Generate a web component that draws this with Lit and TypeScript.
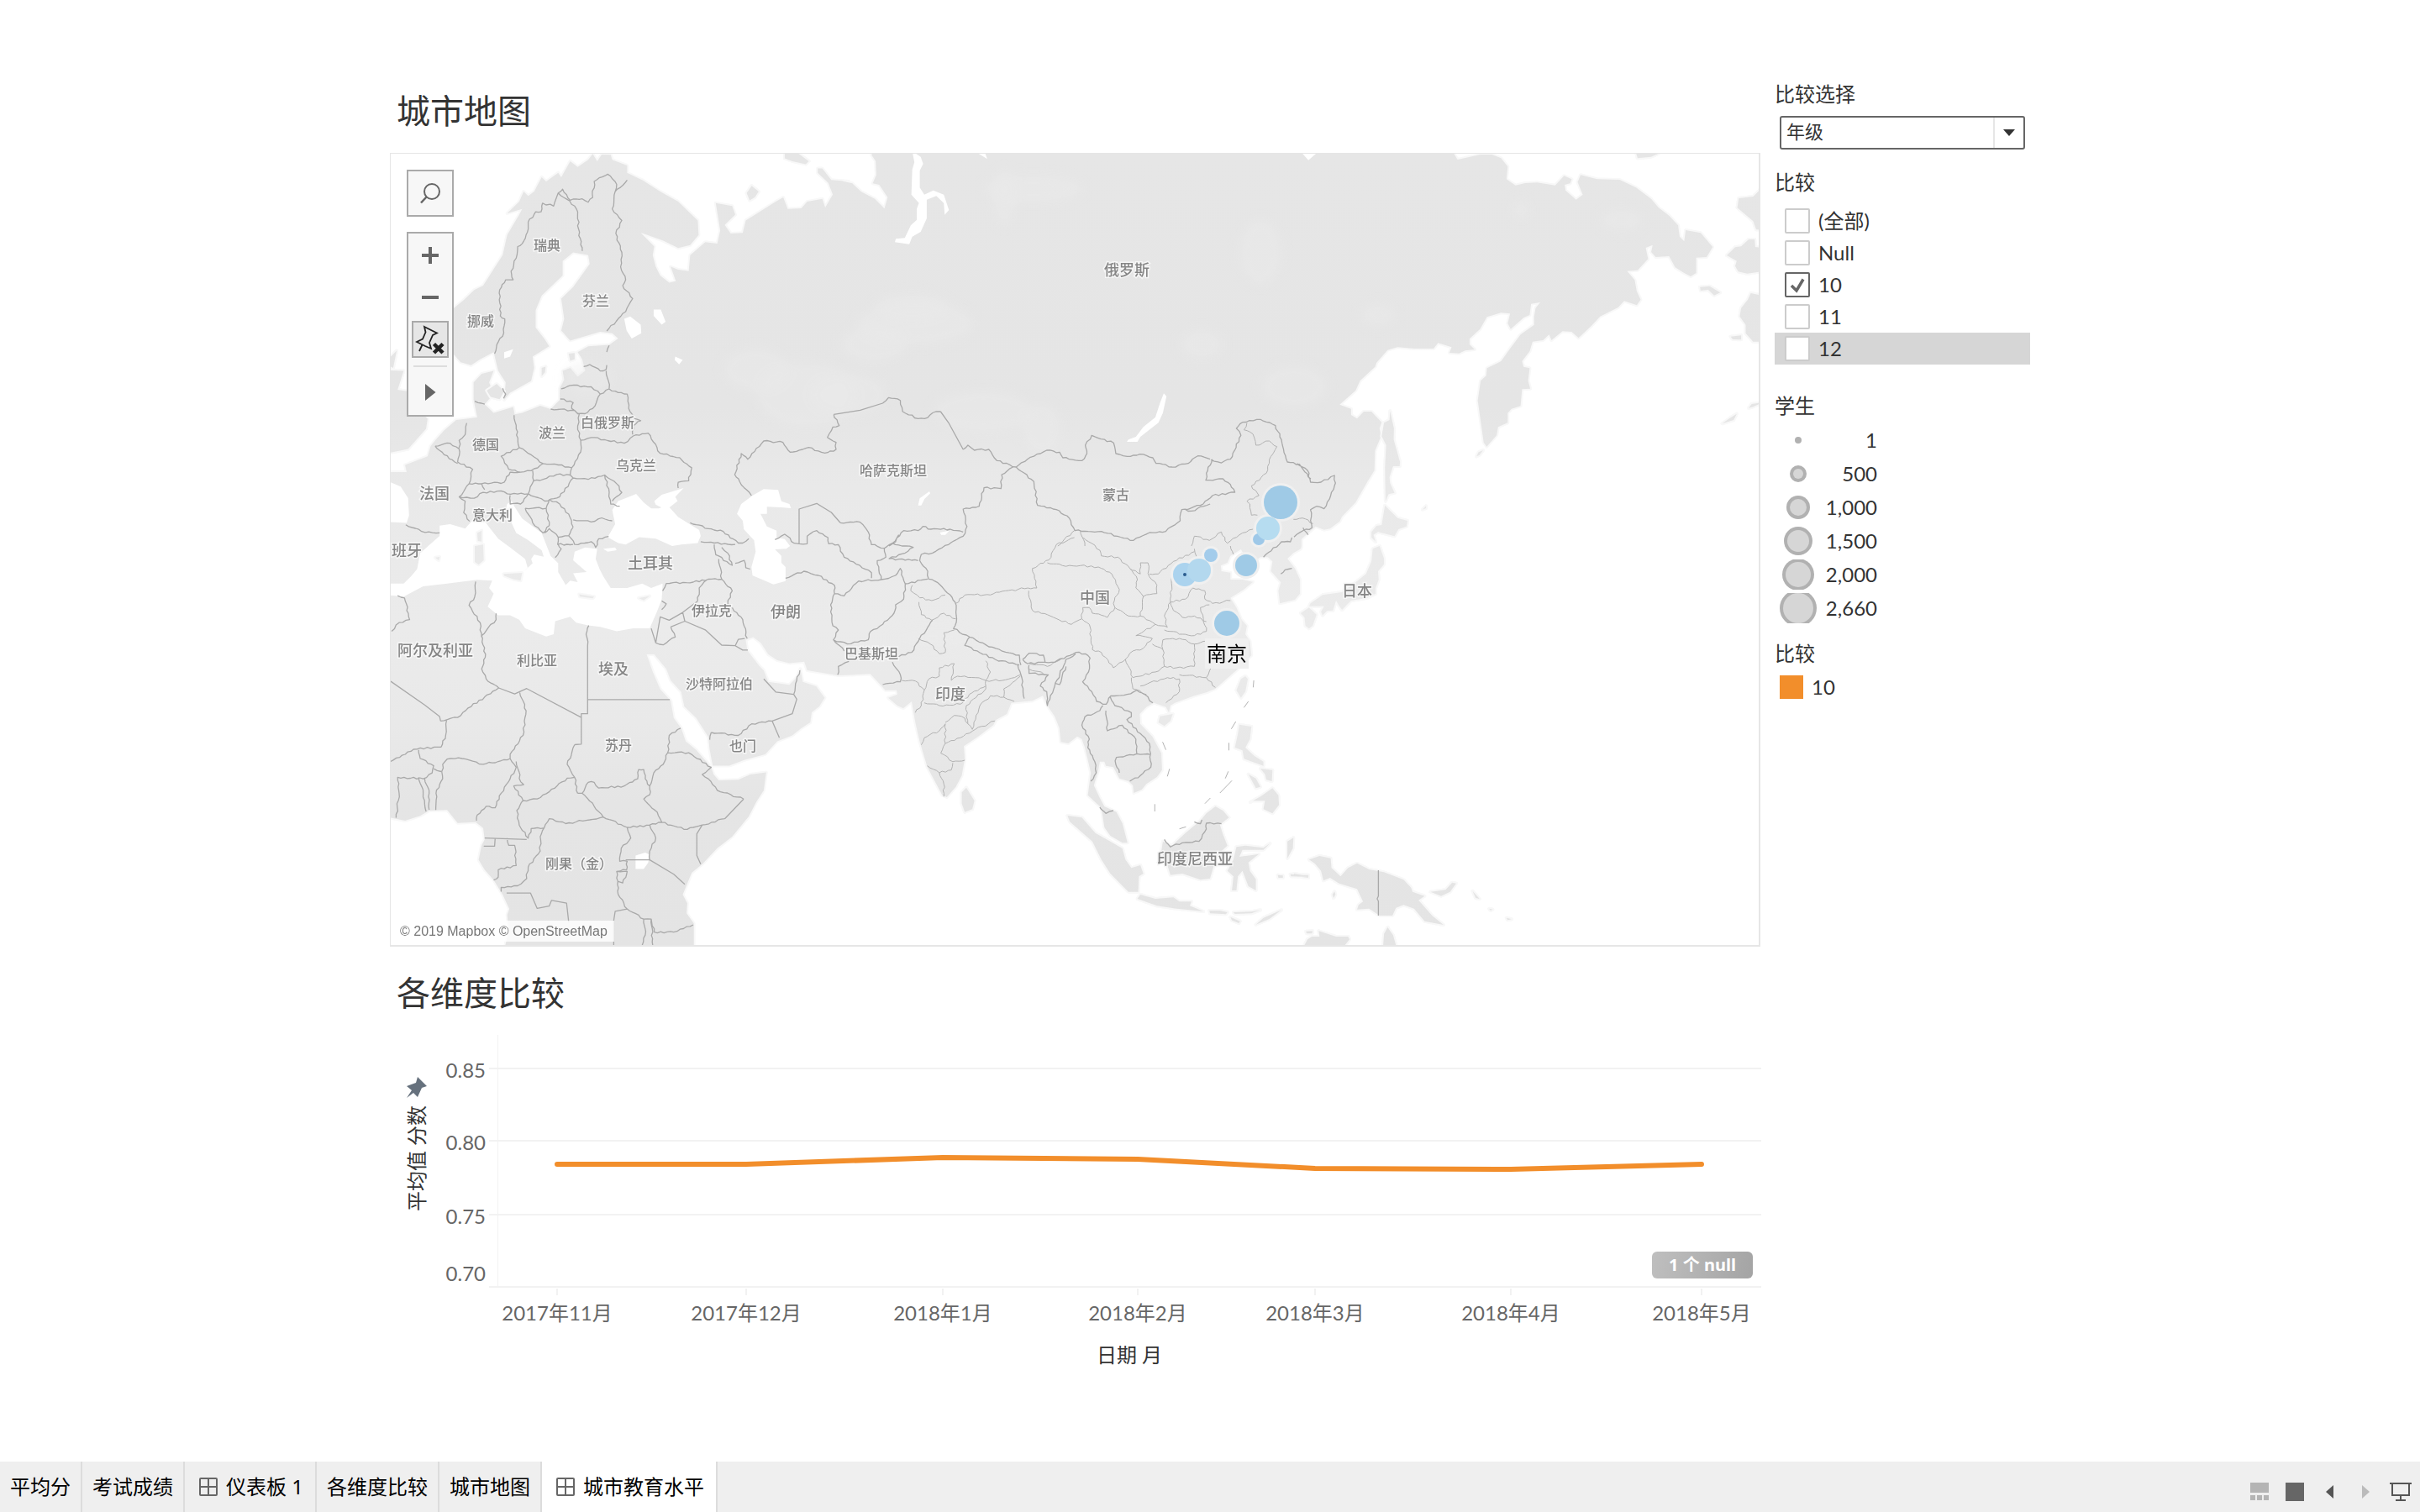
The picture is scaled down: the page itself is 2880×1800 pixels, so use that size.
import { LitElement, html, svg, css } from "lit";
import { customElement, state } from "lit/decorators.js";

type Pt = [number, number];

/* Each survey sheet has its own origin and scale; points are projected to map units. */
const sheet = (ox: number, oy: number, sx: number, sy: number) => (s: string): Pt[] =>
  s.trim().split(/\s+/).map((p) => {
    const [x, y] = p.split(",").map(Number);
    return [ox + x / sx, oy + y / sy] as Pt;
  });

const A = sheet(450, 80, 2.8, 2.904);
const B = sheet(450, 600, 2.8, 2.904);
const C = sheet(1000, 170, 2.8, 3);
const D = sheet(1540, 170, 2.8, 3);
const E = sheet(1000, 640, 2.8, 3);
const F = sheet(1540, 640, 2.8, 3);
const G = sheet(840, 430, 2.613, 3);

const line = (p: Pt[]) => "M" + p.map(([x, y]) => x.toFixed(1) + "," + y.toFixed(1)).join("L");
const ring = (...parts: Pt[][]) => line(parts.flat()) + "Z";

/* Natural frontiers wander: split each leg and push the joints sideways. */
const wander = (p: Pt[], amp: number): string => {
  let seed = 17;
  const rnd = () => {
    seed = (seed * 1103515245 + 12345) % 2147483648;
    return seed / 2147483648 - 0.5;
  };
  const out: Pt[] = [p[0]];
  for (let i = 1; i < p.length; i++) {
    const [x0, y0] = p[i - 1];
    const [x1, y1] = p[i];
    const len = Math.hypot(x1 - x0, y1 - y0) || 1;
    const n = Math.max(1, Math.round(len / 4));
    for (let k = 1; k < n; k++) {
      const d = rnd() * amp * 2;
      out.push([x0 + ((x1 - x0) * k) / n - ((y1 - y0) / len) * d, y0 + ((y1 - y0) * k) / n + ((x1 - x0) / len) * d]);
    }
    out.push([x1, y1]);
  }
  return line(out);
};

const lines = (t: (s: string) => Pt[], s: string) => s.trim().split("|").map((l) => t(l));

const mainland = ring(
  A(`250,835 285,805 320,770 350,755 390,690 415,650 430,580 470,510 480,490 430,505 470,465 485,430 500,445 520,430 545,380 560,395 600,365 610,380 640,325 665,345 700,320 715,300 730,325 745,302 775,303 780,320 830,340 830,365 880,390 940,430 1000,465 1065,530 1068,580 1040,615 1000,625 950,600 875,572 920,620 915,650 925,690 940,720 970,745 992,740 975,690 1000,700 1035,705 1040,650 1090,605 1130,610 1140,565 1125,470 1180,480 1190,510 1155,545 1175,575 1215,573 1225,530 1325,465 1350,450 1365,490 1410,488 1430,465 1480,455 1490,485 1515,440 1500,400 1465,365 1465,350 1480,350 1510,390 1568,395`),
  C(`0,135 40,145 70,175 115,200 147,235 158,195 130,150 108,145 120,115 118,65 105,45 105,30 1540,30`),
  D(`30,30 528,30 545,60 580,52 620,42 660,42 690,55 712,85 708,130 738,152 770,144 810,142 870,152 900,118 925,130 920,145 902,150 905,170 940,203 962,185 945,140 955,115 1010,130 1085,132 1140,160 1190,200 1215,232 1250,260 1280,295 1285,335 1300,352 1305,312 1355,322 1395,372 1375,408 1340,410 1340,465 1322,477 1300,465 1270,445 1250,405 1205,408 1190,390 1195,365 1172,375 1180,415 1145,455 1110,458 1135,490 1142,530 1155,560 1142,580 1100,565 1080,588 1020,620 990,655 948,697 925,675 895,673 858,705 850,685 830,705 795,710 785,745 760,780 765,800 785,805 780,850 787,878 760,880 755,940 725,950 712,965 712,1000 680,1015 675,1045 642,1085 632,1070 612,920 622,850 640,832 643,805 690,780 720,735 755,685 800,650 800,620 805,590 820,570 790,575 785,615 765,625 722,665 712,645 720,610 690,607 643,622 620,665 585,700 585,720 602,738 570,742 550,752 518,750 525,730 480,715 465,735 400,735 345,730 312,740 275,785 270,800 220,850 205,885 152,935 190,950 190,972 210,985 232,960 258,960 292,998 285,1020 290,1048 270,1100 268,1170 245,1210 205,1285 160,1335 152,1352 120,1378 100,1382 72,1370 25,1415 25,1440`),
  E(`1535,40 1510,55 1490,75 1515,110 1532,150 1532,200 1515,222 1465,235 1460,190 1468,160 1435,120 1440,85 1425,70 1400,70 1370,95 1330,125 1345,60 1335,42 1300,65 1290,90 1268,100 1270,120 1300,125 1300,150 1340,150 1375,158 1345,185 1300,215 1320,250 1335,290 1355,315 1350,345 1365,370 1370,420 1345,450 1308,485 1250,540 1220,553 1180,565 1115,590 1100,600 1095,625 1085,605 1045,590 1020,605 998,630 1000,665 1040,710 1070,770 1072,830 1055,855 1020,880 1005,900 978,912 975,885 960,870 930,860 910,820 885,815 880,800 865,800 860,830 845,885 865,930 880,960 920,980 940,1020 957,1090 940,1090 900,1065 880,1035 870,965 825,920 830,880 835,840 815,750 805,720 790,710 760,735 735,730 730,680 715,640 690,600 675,565 640,583 570,590 555,630 520,650 510,670 460,710 412,745 415,790 405,850 385,890 355,927 340,920 325,890 290,820 265,730 250,660 245,630 238,585 210,610 190,600 160,572 190,560 188,545 150,545 120,510 100,487 0,492`),
  B(`1530,592 1430,575 1420,545 1370,550 1330,540 1300,520 1275,480 1250,460 1225,470 1230,505 1270,560 1285,575 1300,615 1370,625 1395,600 1407,570 1415,615 1460,630 1488,670 1470,700 1445,720 1440,755 1410,775 1380,800 1330,820 1290,865 1220,885 1170,905 1115,905 1105,850 1100,805 1060,740 1020,700 1010,650 975,610 960,570 920,520 895,520 915,580 940,640 975,680 985,740 1010,775 1025,820 1060,850 1110,910 1118,935 1135,955 1200,953 1240,935 1293,928 1285,990 1260,1030 1235,1080 1180,1150 1130,1190 1080,1245 1045,1275 1015,1350 1030,1380 1028,1415 1052,1450 1052,1540 420,1540 435,1480 430,1420 437,1400 415,1350 385,1300 355,1265 335,1230 345,1180 355,1160 350,1120 325,1100 265,1103 230,1058 170,1060 140,1078 90,1095 42,1085 30,1085 30,-110`),
  A(`42,1400 95,1400 90,1375 165,1345 175,1310 190,1290 220,1255 260,1220 295,1215 330,1210 318,1150 318,1090 345,1060 385,1050 370,1090 385,1130 355,1165 385,1195 450,1175 455,1200 480,1195 540,1170 575,1182 605,1150 605,1110 620,1080 615,1050 640,1040 665,1070 690,1050 680,1010 665,985 700,965 770,960 800,938 780,920 740,915 640,945 610,910 620,870 610,800 650,760 705,680 700,650 650,640 615,670 615,720 580,755 545,790 525,840 525,900 555,940 570,965 515,1000 520,1040 510,1085 440,1125 420,1150 425,1090 400,1050 385,985 340,1010 310,1030 275,1020 250,990`),
);

const islands = [
  [A, "42,1048 85,1050 65,1115 97,1120 130,1180 165,1215 160,1250 100,1320 42,1332"],
  [A, "42,1000 62,980 50,1040 42,1035"],
  [A, "362,1118 395,1095 420,1120 405,1148 375,1140"],
  [A, "545,1040 558,1035 556,1055 545,1068"],
  [A, "635,990 655,988 655,1010 640,1015"],
  [A, "1355,298 1400,298 1435,325 1425,335 1380,325 1355,315"],
  [A, "1228,435 1245,410 1268,430 1255,450 1238,460"],
  [B, "418,242 480,238 475,265 450,260 420,248"],
  [B, "322,145 350,140 352,195 335,210 322,200"],
  [B, "330,100 345,92 345,130 332,128"],
  [B, "670,312 720,320 715,326 672,320"],
  [B, "868,325 905,318 885,333"],
  [B, "190,185 205,183 202,195"],
  [D, "303,1295 345,1340 378,1350 375,1370 348,1380 335,1405 280,1390 265,1400 272,1425 258,1410 258,1390 275,1368 292,1365"],
  [D, "320,958 333,1020 332,1060 353,1140 352,1155 330,1155 318,1195 320,1215 335,1250 315,1255 305,1280 303,1160 307,1080 292,1048 300,1000 318,990"],
  [F, "262,40 285,30 300,75 300,95 280,120 282,150 272,180 272,200 245,215 190,225 160,258 148,240 140,225 130,260 110,262 95,278 90,265 100,245 50,245 55,235 95,205 160,195 205,160 240,130 258,85"],
  [F, "22,270 50,250 75,275 62,315 50,325 38,315 35,285"],
  [E, "1350,495 1358,505 1350,550 1335,572 1320,545 1335,505"],
  [E, "1065,638 1108,630 1100,655 1080,673 1060,660"],
  [E, "420,893 447,940 440,970 415,980 405,950 405,910"],
  [E, "757,993 805,1000 850,1055 900,1085 940,1110 950,1150 970,1180 1000,1170 1010,1200 995,1210 993,1265 960,1265 900,1200 870,1150 840,1085 765,1015"],
  [E, "1000,1275 1050,1290 1110,1285 1130,1300 1170,1300 1165,1315 1210,1335 1120,1325 1055,1315 990,1290"],
  [E, "1230,1332 1265,1332 1290,1338 1285,1345 1232,1342"],
  [E, "1310,1338 1370,1336 1400,1330 1370,1342 1315,1344"],
  [E, "1385,1382 1410,1358 1470,1330 1430,1362"],
  [E, "1300,1355 1332,1370 1328,1377 1305,1367"],
  [E, "1075,1085 1105,1100 1150,1055 1200,1010 1220,985 1250,960 1275,975 1295,1000 1265,1025 1275,1060 1290,1100 1255,1135 1232,1218 1200,1222 1140,1200 1100,1205 1090,1170 1070,1120"],
  [E, "1320,1105 1350,1100 1410,1108 1432,1092 1410,1115 1340,1115 1330,1140 1395,1130 1360,1160 1365,1190 1385,1220 1385,1260 1360,1245 1340,1190 1325,1210 1320,1260 1305,1260 1310,1210 1290,1190 1310,1150"],
  [E, "1330,668 1370,675 1365,720 1350,750 1380,780 1410,800 1410,815 1345,790 1340,760 1315,750 1325,700"],
  [E, "1400,825 1440,830 1438,870 1420,865 1415,845"],
  [E, "1360,845 1385,860 1400,890 1385,895"],
  [E, "1366,945 1400,925 1440,895 1460,920 1462,955 1440,985 1410,970 1415,940 1375,940"],
  [E, "1490,1085 1510,1072 1508,1110 1490,1145"],
  [E, "1458,1205 1475,1207 1475,1215 1460,1215"],
  [E, "1500,1202 1560,1205 1560,1212 1502,1210"],
  [F, "0,1200 45,1208 48,1215 0,1208"],
  [F, "50,1150 85,1137 122,1145 125,1180 155,1210 180,1180 210,1163 250,1185 300,1195 365,1222 390,1250 395,1265 435,1280 415,1295 440,1325 460,1350 498,1383 435,1370 400,1325 365,1312 340,1322 328,1350 285,1350 250,1325 210,1328 215,1312 230,1300 210,1255 150,1235 120,1215 98,1225 90,1190 70,1165"],
  [F, "455,1265 505,1258 527,1232 540,1235 520,1265 490,1280"],
  [F, "595,1262 618,1290 605,1287"],
  [F, "708,1358 725,1363 712,1366"],
  [F, "650,1325 662,1328 655,1332"],
  [F, "128,1275 135,1264 138,1275 132,1287"],
  [F, "35,1455 45,1435 60,1425 85,1425 82,1405 140,1425 180,1425 185,1435 170,1455"],
  [F, "40,1406 62,1405 60,1414 42,1414"],
  [F, "297,1457 300,1415 312,1392 330,1420 340,1457"],
  [D, "1560,160 1530,192 1482,198 1477,232 1530,280 1540,310 1560,310"],
  [D, "1560,375 1537,372 1535,345 1515,345 1490,370 1470,373 1442,402 1475,422 1470,440 1480,460 1510,467 1560,460"],
  [D, "1560,545 1522,537 1512,560 1490,590 1485,620 1505,650 1505,680 1530,710 1560,710"],
  [D, "1353,515 1385,512 1420,535 1400,545 1380,525 1355,528"],
  [D, "1138,30 1215,38 1190,50 1145,55"],
  [D, "1455,692 1490,688 1490,703 1462,702"],
  [D, "1515,947 1525,933 1560,928 1530,943"],
  [D, "1427,1003 1450,985 1475,968 1465,990"],
  [D, "608,1120 615,1105 630,1098 618,1115"],
  [D, "428,1310 440,1297 440,1305"],
].map(([t, s]) => ring((t as typeof A)(s as string))).join("");

const waters = [
  [B, "42,275 85,275 110,250 130,225 140,170 205,110 205,75 240,70 290,85 310,62 345,45 370,80 400,120 440,150 490,190 498,220 480,238 515,205 510,190 520,175 552,182 545,160 500,125 460,100 425,20 430,0 445,-10 455,10 480,50 545,100 560,140 575,180 600,205 600,235 625,280 640,265 665,270 650,240 695,235 650,195 655,165 690,150 730,155 725,190 738,225 750,250 775,290 830,290 880,275 910,290 948,275 945,330 930,370 905,430 850,430 795,440 740,425 700,420 660,410 640,390 590,405 585,450 560,458 490,430 470,400 440,385 400,385 365,355 385,310 370,290 380,265 330,262 230,275 150,285 85,320 30,315 30,275"],
  [B, "30,-80 75,-60 100,-20 103,40 95,65 30,62"],
  [B, "780,20 800,-10 825,-20 860,-35 885,-5 910,15 935,15 965,5 1000,45 1070,90 1075,110 1065,135 1010,140 980,145 925,120 870,115 825,140 800,135 765,115 790,70"],
  [A, "920,1500 945,1478 1018,1455 990,1485 998,1500 960,1530 925,1512"],
  [B, "750,155 790,150 795,160 765,165"],
  [G, "145,480 180,457 225,460 235,500 260,510 265,525 235,522 190,520 190,545 170,545 190,590 220,605 220,630 245,635 262,660 250,670 215,672 235,695 235,720 248,735 248,785 210,797 145,765 142,735 155,680 150,640 118,600 115,570 97,545 110,510"],
  [G, "660,515 665,490 695,465 698,472 680,492 670,515"],
  [G, "728,612 757,605 745,620 732,620"],
  [C, "1078,895 1087,905 1075,965 1060,1000 1000,1050 990,1068 955,1068 960,1060 985,1050 1010,1015 1050,980 1065,930"],
  [C, "240,30 268,50 276,75 265,100 265,160 280,185 310,170 345,185 362,240 348,257 345,215 320,190 288,203 288,270 268,318 240,335 230,362 182,355 185,343 215,340 235,295 255,275 255,235 262,215 237,185 240,95 247,70"],
  [C, "1540,38 1560,62 1586,38"],
  [C, "460,38 490,58 483,38"],
  [A, "820,870 840,862 875,890 877,920 845,938 828,910"],
  [A, "918,838 942,838 958,880 945,890 918,860"],
  [A, "990,1000 1015,1012 1003,1027 988,1012"],
  [A, "420,985 450,975 440,1000 420,1007"],
  [B, "858,1215 890,1205 905,1212 900,1240 885,1262 858,1262"],
].map(([t, s]) => ring((t as typeof A)(s as string))).join("");

const natural = [
  ...lines(A, `388,990 400,950 415,930 422,870 407,860 405,770 425,735 450,735 443,705 460,660 465,620 480,610 500,560 500,535 525,500 543,500 548,470 585,480 600,435 615,422 640,460 680,455 700,467 715,450 720,395 765,370 795,405 790,430 830,390|600,435 655,480 665,500 668,560 680,635|790,430 780,490 812,530 792,575 812,640 808,690 825,735 815,755 848,800 825,845 762,912|770,962 762,985|685,1035 705,1028 740,1050 760,1045 762,1030|760,1050 770,1110|610,1112 640,1100 710,1105 740,1130 770,1112 800,1125 830,1130 835,1180 855,1215 875,1222 850,1240 848,1270|740,1130 715,1180 690,1198 665,1198 645,1180 650,1160 607,1147|575,1182 655,1187 670,1200 665,1240 675,1290 675,1330 645,1385|675,1290 710,1280 820,1300 850,1275 900,1265 940,1335 1005,1350 1045,1385 1035,1430 1000,1435 1000,1455|453,1203 460,1250 470,1315 410,1345 435,1390 475,1400 510,1395 550,1370 500,1335 470,1315|550,1370 600,1375 645,1385 640,1410 595,1408 550,1425 518,1430 515,1395|295,1230 290,1270 270,1290 272,1330 265,1365 315,1390 303,1440 345,1440 420,1435 440,1400 475,1400|190,1310 220,1340 265,1370|190,1310 240,1300 270,1320|303,1440 270,1485 320,1490 350,1470 410,1465 430,1475 500,1475 518,1430|345,1440 355,1460|500,1475 555,1500 605,1485 650,1420 640,1410|650,1420 700,1425 755,1410 770,1470 775,1510 805,1518|755,1410 795,1440 812,1470 780,1500|322,1155 355,1165|415,1110 425,1130 418,1145|440,1480 440,1510 475,1510 500,1475|270,1485 290,1500 285,1540 305,1570|490,1525 560,1525 570,1495 605,1510 635,1545 650,1590|490,1525 515,1575 550,1610 570,1585 560,1525`),
  ...lines(B, `92,72 145,95 205,100|650,55 710,62 745,48 780,58|650,80 635,110 655,140 710,130 725,150 735,120 768,112|635,110 600,115 598,140 650,140|555,100 570,85 600,115|600,140 610,155 590,185|1040,65 1100,85 1150,95 1200,135 1215,135 1235,120|1075,130 1120,135 1190,140|1120,140 1125,175 1180,212 1165,170 1145,150|1190,205 1220,195 1225,220 1240,225|1135,190 1145,260 1180,300 1165,345 1215,400 1230,465|948,300 960,275 1050,270 1100,260 1145,260|1095,262 1070,290 1065,335|925,480 950,487 990,460 975,425|945,365 960,345 945,335|702,420 693,450 698,490|345,455 393,400 393,378|402,636 360,605 345,570 357,530 345,455|325,268 322,320 303,350 340,410 345,460|65,317 88,325 105,400 70,410 45,440|208,750 265,738 300,705 402,636|228,748 225,800 210,840 118,848 42,890|472,652 493,715 483,800 440,865 440,880 400,890 350,900 280,880 230,882 215,900 215,950 193,1000 192,1058|135,850 140,880 185,905 180,930 150,950 65,945 70,1000 60,1085|135,945 150,1000 160,1063|155,950 170,1000 170,1057|185,915 210,925|440,880 460,910 440,950 410,1000 390,1050 360,1045 330,1075 328,1095|460,890 475,960 485,970 452,975 483,1025 530,1020 570,995 630,948 655,945|483,1025 462,1060 470,1110 500,1155 510,1122 553,1120 570,1088 625,1105 750,1082 720,1045 680,1000 665,1000|680,1000 700,962 720,962 735,982 820,975 865,950 868,918 885,918 890,950 905,975 905,1005 885,1020 930,1065 945,1100 1030,1125 1080,1110 1155,1088|905,975 925,920 950,900 965,860 970,800 1008,775|965,860 1035,860 1110,910 1080,935 1100,950 1130,990 1218,1020|750,1082 830,1118 905,1110 945,1100|830,1118 842,1155 810,1190 805,1235 830,1235 828,1265 795,1270 800,1350 830,1400|655,832 630,900 655,945 665,1000|905,1110 925,1155 905,1200 905,1230|795,1270 830,1270 815,1310 800,1305|830,1400 885,1435 910,1435 920,1480 985,1480 1050,1455|885,1435 890,1490 880,1525|910,1435 915,1525|553,1120 540,1150 540,1200 500,1255 495,1295 465,1320 410,1325 410,1340|430,1155 435,1180 455,1180 460,1250 400,1265 400,1290 385,1300|1110,790 1200,800 1245,760 1313,750|1385,658 1395,610 1405,575|1110,790 1105,815`),
  ...lines(G, `142,480 105,430 90,405 110,330 130,350 180,285 240,290 262,325 320,308 370,328 405,315 405,290 378,272 395,235 415,230 398,190|550,150 568,130 605,140 612,180 660,205 680,205 715,180 730,180|800,315 815,300 835,318 880,315 905,355 945,370 965,378 1000,350 1060,318 1100,325 1110,345 1170,355 1185,330 1180,300 1200,265 1268,292 1275,330 1310,340 1350,332 1390,345 1400,365 1450,378 1500,365 1530,338 1568,350|955,378 920,405 918,455 865,452 850,518 800,528 812,590 800,625 755,655 705,685 670,690 665,712 690,750 693,778 720,790 760,835 775,860 780,920 770,955 820,985 880,1020 975,1050 980,1085|800,610 760,600 700,600 675,590 660,605 615,605 580,650 555,668 515,655 505,610 480,575 418,577|290,652 315,652 315,625 345,605 380,630 382,652 412,655 430,700 515,755 515,775|215,637 245,618 275,650 290,652|580,650 610,660 645,665 620,685 570,705 660,712|600,620 590,645 570,660|555,668 560,700 533,712 545,780|248,775 305,750 350,765 400,800 400,830 430,838 475,785 545,780 590,765 605,740 620,795 690,778|400,830 388,870 395,945 412,960 397,995 440,1010 505,995 512,965 550,940 585,900 590,870 615,850 620,795|397,995 430,1035|445,1072 412,1090 410,1120|705,925 690,950 665,990 640,1040 600,1055|580,1075 605,1120 605,1145 550,1155|965,378 1020,430 1032,515 1090,530 1130,560 1148,605 1230,608 1330,640 1380,612 1430,608 1475,570 1480,530 1510,535 1568,510|820,985 805,1015 900,1065 975,1085|985,1065 1005,1043 1050,1050 1055,1075 1000,1080 985,1065|1055,1075 1085,1075 1150,1040 1180,1045 1195,1060 1190,1110 1172,1145 1200,1180 1215,1215 1245,1225 1260,1195 1310,1190 1340,1175 1365,1190 1390,1220|970,1085 980,1120 990,1205|1005,1085 1005,1115 1065,1120 1040,1160 1060,1180 1062,1230 1085,1160 1120,1065 1150,1045|1085,1150 1100,1155 1120,1090`),
  ...lines(C, `1235,1132 1270,1143 1300,1130 1335,1045 1320,1020 1340,998 1400,988 1450,1010 1470,1060 1490,1140 1530,1148 1568,1200|1150,1310 1200,1295 1240,1260 1315,1248 1300,1220 1275,1200 1218,1205 1220,1180 1240,1130`),
  ...lines(D, `10,1145 45,1170 55,1212 90,1212 135,1188 138,1215 122,1260 100,1307 75,1298 55,1310 60,1375 30,1385 0,1408|30,1375 47,1400`),
  ...lines(E, `1505,0 1500,15 1470,15 1410,70|1468,130 1482,115 1505,110|875,600 865,618 815,640 805,670 830,720 825,750 848,800 853,840 835,870|900,570 915,600 970,625 970,640 955,650 1000,700 1030,735 1035,820 1000,850 965,870|885,618 890,690 940,670 985,720 988,772 920,785 918,810 930,840|988,772 1035,775|865,963 885,985 910,975|1080,1078 1100,1105 1140,1090 1195,1085 1215,1050 1220,1020 1270,1022|1180,1015 1200,1022 1205,1008`),
].map((p) => wander(p, 1.1)).join("");

const surveyed = [
  ...lines(B, `698,490 698,725 677,725 677,830 655,832|698,676 972,676|677,738 495,638 455,657 402,636|42,613 155,695 205,735 208,750|1065,335 1015,375 1022,405 1090,435 1145,488 1190,490 1215,505 1232,505|1190,490 1200,468 1222,465|1015,375 970,402 940,390 925,480|975,425 1022,405|910,430 925,480|1155,1088 1218,1020|905,1230 985,1280 1022,1315|825,1230 905,1230|1080,1110 1062,1140 1062,1215 1075,1245|355,1155 495,1160|390,1155 388,1183 352,1183|428,1345 508,1345 530,1398 570,1390 578,1370 628,1380 635,1445|830,1400 790,1408 785,1440 785,1525|1313,750 1380,725 1395,675 1385,658 1325,650 1285,605|1313,750 1337,808`),
  ...lines(G, `418,577 390,540 345,508 290,528 290,652|730,180 755,220 800,315|398,190 480,175 550,150`),
  ...lines(F, `281,1188 281,1280 277,1290 281,1298 281,1350`),
].map(line).join("");

const provinces = [
  ...lines(E, `780,0 720,25 695,80 640,110 655,180 625,180 530,195 500,205 415,205 385,235|690,90 740,100 800,100 860,105 905,130 930,185 910,235 915,250 890,285 840,270 830,250 808,250 805,290 770,310 700,280 640,260 628,190|805,290 830,310 840,400 870,410 910,465 950,435 975,405 1010,395 1040,360 985,350 1050,310 1000,280 960,280 915,250|810,0 865,45 870,65 925,70 965,110 1000,130 1000,90 1025,90 1030,140 1055,170 1055,200 1010,210 985,180 990,150 965,110|1030,130 1060,130 1110,85 1180,50|1105,140 1100,230 1150,220 1175,180 1215,190 1215,220 1240,235 1300,225|1010,210 1000,280|1100,230 1110,260 1140,285 1180,280 1220,300|1050,310 1090,320 1080,280 1100,230|1080,330 1140,345 1180,350 1220,335 1210,290 1200,250 1230,240|1040,380 1075,400 1080,460 1120,465 1180,460 1180,380 1130,360 1075,365 1075,400|950,435 975,500 1050,480 1080,460|970,500 975,540 1020,560|1000,530 1090,500 1130,505 1130,550 1085,590|1130,490 1220,500 1250,535|1180,380 1220,370|1220,500 1235,465|1180,40 1190,80|1300,30 1310,60|205,510 250,512 280,545 270,600 250,625|280,590 330,600 400,595 430,560 485,530|485,510 500,480 485,440|260,360 300,380 330,415 350,410 345,340|280,545 295,505 330,495 330,465 380,450 370,510 390,495 450,500 485,510 540,510 600,490|485,510 485,540 420,600 425,665 440,685 465,600 500,565 545,570 545,540 600,495|545,570 580,585|350,660 380,635 415,645 425,665|270,740 280,715 330,690 350,665 350,735 400,715 450,685 515,655|350,735 335,770 375,800 415,795|290,815 330,840 370,830 375,805|330,840 345,880 345,925|240,170 235,190 265,215 305,225 350,205|262,230 270,275 305,295 345,270 385,290|345,340 380,330|630,450 690,460 740,430|630,470 690,490`),
  ...lines(C, `1170,1440 1180,1405 1230,1420 1270,1390 1290,1430 1330,1400 1375,1380|1390,1330 1370,1330 1365,1290 1355,1280 1395,1260 1370,1225 1420,1180 1435,1120 1455,1085 1430,1065 1385,1080 1375,1040 1345,1025 1355,1000|1510,1345 1540,1340 1575,1360|725,1440 780,1385|800,1385 815,1440`),
].map((p) => wander(p, 1.2)).join("");

const dashes = lines(E, `1378,510 1376,535|1360,585 1345,607|1318,657 1303,683|1295,733 1295,760|1293,835 1283,860|1305,868 1265,912|1233,930 1215,950|1048,952 1048,978|1074,730 1085,758|1097,826 1090,853|1130,1040 1152,1033`).map(line).join("");

const texture: [number, number, number, number][] = [
  [1090, 385, 70, 26], [1040, 410, 40, 22], [1230, 225, 60, 18], [1195, 235, 14, 34], [1500, 300, 26, 40], [1085, 365, 44, 16],
  [960, 470, 60, 40], [900, 440, 40, 26], [1170, 490, 60, 26], [1240, 510, 24, 30], [1010, 470, 46, 26], [1540, 460, 40, 26],
  [1930, 262, 26, 14], [1810, 250, 12, 12], [1640, 375, 22, 14], [1430, 410, 26, 18], [700, 450, 30, 20], [1110, 760, 50, 14],
];

const places: [string, number, number, number][] = [
  ["瑞典", 651, 291, 16], ["芬兰", 709, 357, 16], ["挪威", 572, 381, 16], ["波兰", 657, 514, 16], ["德国", 578, 528, 16],
  ["白俄罗斯", 723, 502, 16], ["乌克兰", 757, 553, 16], ["法国", 517, 586, 18], ["意大利", 586, 612, 16], ["班牙", 484, 654, 18],
  ["土耳其", 774, 669, 18], ["伊拉克", 847, 726, 16], ["伊朗", 935, 727, 18], ["阿尔及利亚", 518, 773, 18], ["利比亚", 639, 785, 16],
  ["埃及", 730, 795, 18], ["沙特阿拉伯", 856, 813, 16], ["苏丹", 736, 886, 16], ["也门", 884, 887, 16], ["刚果（金）", 689, 1027, 16],
  ["俄罗斯", 1341, 320, 18], ["哈萨克斯坦", 1063, 559, 16], ["蒙古", 1328, 588, 16], ["中国", 1303, 710, 18], ["巴基斯坦", 1037, 777, 16],
  ["印度", 1131, 825, 18], ["印度尼西亚", 1422, 1021, 18], ["日本", 1615, 702, 18],
];

const marks: [number, number, number, string][] = [
  [1498, 642, 7, "#9ec8e8"], [1524, 598, 20, "#9fcae6"], [1509, 629, 14, "#b6dcf0"], [1441, 661, 8, "#a3cceb"],
  [1410, 684, 14, "#abd3ee"], [1427, 679, 14, "#b3d8ee"], [1483, 673, 13, "#9fcae6"], [1460, 742, 15, "#9fcae6"],
];

const months: [string, number, number][] = [
  ["2017年11月", 663, 1386], ["2017年12月", 888, 1386], ["2018年1月", 1122, 1378], ["2018年2月", 1354, 1380],
  ["2018年3月", 1565, 1391], ["2018年4月", 1798, 1392], ["2018年5月", 2025, 1386],
];

const levels: [string, number, number][] = [["0.85", 1272, 1273], ["0.80", 1358, 1359], ["0.75", 1446, 1447], ["0.70", 1532, 1515]];

const FAMILY = css`Lato, "Noto Sans CJK SC", sans-serif`;

@customElement("city-map")
class CityMap extends LitElement {
  static styles = css`
    :host { display: block; position: relative; overflow: hidden; border: 1px solid #e6e6e6; border-right-width: 2px; border-bottom-width: 2px; margin-right: 1px; }
    .map { display: block; width: 100%; height: auto; }
    .coast { fill: url(#relief); stroke: #f8f8f8; stroke-width: 4; stroke-linejoin: round; paint-order: stroke; }
    .water { fill: #fff; }
    .tex { fill: #eaeaea; opacity: 0.4; }
    .border { fill: none; stroke: #a9a9a9; stroke-width: 1.3; stroke-linejoin: round; }
    .prov { fill: none; stroke: #b2b2b2; stroke-width: 1; }
    .place { font-family: "Noto Sans CJK SC", sans-serif; fill: #858585; stroke: #f6f6f6; stroke-width: 3px; paint-order: stroke; text-anchor: middle; dominant-baseline: central; font-weight: 500; }
    .city { font-family: "Noto Sans CJK SC", sans-serif; font-size: 24px; fill: #000; text-anchor: middle; dominant-baseline: central; }
    .tools { position: absolute; left: 19px; top: 19px; display: flex; flex-direction: column; gap: 18px; }
    .box { box-sizing: border-box; width: 56px; border: 2px solid #aaa; background: #f7f7f7; display: flex; flex-direction: column; align-items: center; }
    .box.stack { height: 220px; padding-top: 1px; }
    button { appearance: none; border: 0; background: none; padding: 0; margin: 0; display: grid; place-items: center; box-sizing: border-box; width: 44px; height: 50px; }
    button.find { height: 52px; }
    button.pin { border: 2px solid #aaa; background: #e6e6e6; height: 44px; margin-top: 3px; }
    .rule { width: 40px; height: 2px; background: #ddd; margin: 9px 0 5px; }
    .credit { position: absolute; left: 0; bottom: 4px; padding: 0 8px 0 11px; background: rgba(255, 255, 255, 0.8); font: 16px/25px "Liberation Sans", Arial, sans-serif; color: #777; }
  `;

  render() {
    return html`
      <svg class="map" viewBox="465 183 1628 942" role="img" aria-label="城市地图">
        <defs>
          <linearGradient id="relief" gradientUnits="userSpaceOnUse" x1="0" y1="183" x2="0" y2="1125">
            <stop offset="0" stop-color="#e6e6e6" /><stop offset=".32" stop-color="#e5e5e5" /><stop offset=".42" stop-color="#e9e9e9" />
            <stop offset=".6" stop-color="#ebebeb" /><stop offset=".72" stop-color="#e9e9e9" /><stop offset=".82" stop-color="#e5e5e5" /><stop offset="1" stop-color="#e4e4e4" />
          </linearGradient>
          <filter id="soft" x="-30%" y="-30%" width="160%" height="160%"><feGaussianBlur stdDeviation="6" /></filter>
        </defs>
        <path class="coast" d=${mainland + islands} />
        <g filter="url(#soft)">${texture.map(([x, y, a, b]) => svg`<ellipse class="tex" cx=${x} cy=${y} rx=${a} ry=${b} />`)}</g>
        <path class="water" d=${waters} />
        <path class="coast" d=${islands} />
        <path class="prov" d=${provinces + dashes} />
        <path class="border" d=${natural + surveyed} />
        ${places.map(([t, x, y, s]) => svg`<text class="place" x=${x} y=${y} font-size=${s}>${t}</text>`)}
        ${marks.map(([x, y, r]) => svg`<circle cx=${x} cy=${y} r=${r + 3} fill="#f0f0f0" />`)}
        ${marks.map(([x, y, r, c]) => svg`<circle cx=${x} cy=${y} r=${r} fill=${c} />`)}
        <circle cx="1410" cy="684" r="2" fill="#2b5d8f" />
        <rect x="1434" y="760" width="52" height="36" fill="#f0f0f0" />
        <text class="city" x="1460" y="776">南京</text>
      </svg>
      <div class="tools">
        <div class="box">
          <button class="find" aria-label="搜索">
            <svg width="28" height="28" viewBox="0 0 28 28" fill="none" stroke="#666" stroke-width="2"><circle cx="16" cy="12" r="9" /><path d="M9.500 18.500L3 25.500" stroke-width="2.500" /></svg>
          </button>
        </div>
        <div class="box stack">
          <button aria-label="放大"><svg width="20" height="20" viewBox="0 0 20 20" fill="#666"><path d="M8 0h4v8h8v4h-8v8H8v-8H0V8h8z" /></svg></button>
          <button aria-label="缩小"><svg width="20" height="20" viewBox="0 0 20 20" fill="#666"><path d="M0 8h20v4H0z" /></svg></button>
          <button class="pin" aria-label="重置">
            <svg width="36" height="36" viewBox="0 0 36 36" fill="none" stroke="#222" stroke-width="1.800"><path d="M11 3L26 10.500L21 13L17 22L19 29L12 26L2 21L9 17.500L12.500 9.500zM8.500 24.500L5 32" /><path d="M22.500 23.500L33 34M33 23.500L22.500 34" stroke-width="4.500" /></svg>
          </button>
          <div class="rule"></div>
          <button aria-label="展开"><svg width="14" height="20" viewBox="0 0 14 20" fill="#666"><path d="M1 0L13.500 10L1 20z" /></svg></button>
        </div>
      </div>
      <div class="credit">© 2019 Mapbox © OpenStreetMap</div>
    `;
  }
}

@customElement("trend-chart")
class TrendChart extends LitElement {
  static styles = css`
    :host { display: block; position: relative; }
    .plot { display: block; width: 100%; height: auto; }
    text { font-family: ${FAMILY}; font-size: 24px; dominant-baseline: central; }
    .tick { fill: #666; }
    .title { fill: #333; text-anchor: middle; }
    .mid { text-anchor: middle; }
    .end { text-anchor: end; }
    .badge { position: absolute; right: 10px; bottom: 118px; width: 120px; height: 32px; border: 0; border-radius: 6px; padding: 0; background: linear-gradient(105deg, #bfbfbf, #a4a4a4); color: #fff; font: 700 20px/28px "Noto Sans", "Noto Sans CJK SC", sans-serif; }
  `;

  render() {
    const path = "M" + months.map(([, x, y]) => `${x},${y}`).join("L");
    return html`
      <svg class="plot" viewBox="464 1214 1632 426" role="img" aria-label="各维度比较">
        <path d="M592.500 1232V1531" stroke="#f2f2f2" />
        ${levels.map(([t, y, ty]) => svg`<path d="M582 ${y}H2096" stroke="#f2f2f2" stroke-width="2" /><text class="tick end" x="578" y=${ty}>${t}</text>`)}
        ${months.map(([t, x]) => svg`<path d="M${x} 1534V1542" stroke="#f2f2f2" stroke-width="2" /><text class="tick mid" x=${x} y="1562">${t}</text>`)}
        <path d=${path} fill="none" stroke="#f28e2b" stroke-width="6" stroke-linecap="round" stroke-linejoin="round" />
        <text class="title" x="1344" y="1612">日期 月</text>
        <text class="title" transform="translate(495 1379) rotate(-90)">平均值 分数</text>
        <path d="M497 1282L508 1293L502 1295L497 1306L492 1301L484 1307L490 1298L484 1293L495 1289z" fill="#66717d" />
      </svg>
      <button class="badge">1 个 null</button>
    `;
  }
}

@customElement("app-root")
class AppRoot extends LitElement {
  static styles = css`
    :host { display: flex; flex-direction: column; min-height: 100vh; background: #fff; color: #333; font: 24px/32px ${FAMILY}; }
    .board { flex: 1; box-sizing: border-box; width: 100%; max-width: 1952px; margin: 0 auto; padding-top: 96px; display: grid; grid-template-columns: minmax(0, 1fr) 304px; column-gap: 16px; align-items: start; }
    h2 { margin: 4px 8px 18px; font-size: 40px; line-height: 64px; font-weight: 400; color: #333; }
    h2.second { margin: 23px 8px 0; }
    h3 { margin: 0; font-size: 24px; line-height: 32px; font-weight: 400; color: #333; }
    .pick { display: block; margin-bottom: 10px; }
    .combo { position: relative; margin: 0 6px 23px; }
    .combo select { display: block; appearance: none; box-sizing: border-box; width: 100%; height: 40px; border: 2px solid #666; border-radius: 3px; background: #fff; padding: 0 44px 2px 6px; font: 22px/30px ${FAMILY}; color: #333; }
    .combo .arrow { position: absolute; right: 2px; top: 2px; bottom: 2px; width: 34px; border-left: 2px solid #e6e6e6; display: grid; place-items: center; pointer-events: none; }
    .options { margin: 11px 0 33px; }
    .option { display: flex; align-items: center; gap: 10px; height: 38px; padding-left: 12px; }
    .option.hover { background: #d6d6d6; }
    .option input { appearance: none; margin: 0; box-sizing: border-box; width: 30px; height: 30px; border: 2px solid #ccc; border-radius: 2px; background: #fff; }
    .option input:checked { border-color: #666; background: #fff; }
    .tick { display: grid; width: 30px; height: 30px; }
    .tick > * { grid-area: 1 / 1; }
    .tick svg { pointer-events: none; }
    .legend { list-style: none; margin: 5px 0 18px; padding: 0; width: 122px; }
    .legend li { display: flex; align-items: center; justify-content: space-between; height: 40px; padding-left: 4px; }
    .swatches { list-style: none; margin: 4px 0 0; padding: 0 6px; }
    .swatches li { display: flex; align-items: center; gap: 10px; height: 40px; }
    .swatches i { width: 28px; height: 28px; background: #f28e2b; }
    .bar { display: flex; height: 60px; background: #efefef; }
    .tabs { display: flex; font-family: "Noto Sans", "Noto Sans CJK SC", sans-serif; }
    .tab { display: flex; align-items: center; gap: 10px; padding: 0 12px; border-right: 2px solid #dcdcdc; color: #000; text-decoration: none; }
    .tab.grid { padding: 0 14px 0 17px; }
    .tab.on { background: #fff; }
    .views { margin-left: auto; display: flex; align-items: center; gap: 14px; padding: 12px 9px 0 0; }
    .views button { appearance: none; border: 0; background: none; padding: 0; width: 28px; height: 28px; display: grid; place-items: center; }
  `;

  @state() private checked = "10";

  private tabs: [string, boolean][] = [
    ["平均分", false], ["考试成绩", false], ["仪表板 1", true], ["各维度比较", false], ["城市地图", false], ["城市教育水平", true],
  ];

  render() {
    return html`
      <main class="board">
        <section>
          <h2>城市地图</h2>
          <city-map></city-map>
          <h2 class="second">各维度比较</h2>
          <trend-chart></trend-chart>
        </section>
        <aside>
          <label class="pick" for="measure">比较选择</label>
          <div class="combo">
            <select id="measure"><option>年级</option></select>
            <span class="arrow"><svg width="14" height="8" viewBox="0 0 14 8"><path d="M0 0h14L7 8z" fill="#333" /></svg></span>
          </div>
          <h3>比较</h3>
          <div class="options">
            ${["(全部)", "Null", "10", "11", "12"].map((v) => html`
              <label class="option ${v === "12" ? "hover" : ""}">
                <span class="tick">
                  <input type="checkbox" .checked=${v === this.checked} />
                  ${v === this.checked ? html`<svg width="30" height="30" viewBox="0 0 30 30"><path d="M8 16L14 22L22 8.500" fill="none" stroke="#666" stroke-width="3.500" /></svg>` : ""}
                </span>
                ${v}
              </label>`)}
          </div>
          <h3>学生</h3>
          <ul class="legend">
            ${([["1", 4], ["500", 10], ["1,000", 14], ["1,500", 17], ["2,000", 19], ["2,660", 22]] as [string, number][]).map(([t, r]) => html`
              <li>
                <svg width="48" height="36" viewBox="-24 -18 48 36"><circle r=${r} fill="#b1b1b1" /><circle r=${Math.max(0, r - 4)} fill="#d6d6d6" /></svg>
                <span>${t}</span>
              </li>`)}
          </ul>
          <h3>比较</h3>
          <ul class="swatches"><li><i></i>10</li></ul>
        </aside>
      </main>
      <nav class="bar">
        <div class="tabs">
          ${this.tabs.map(([t, grid], i) => html`
            <a href="#sheet-${i}" class="tab ${grid ? "grid" : ""} ${i === 5 ? "on" : ""}">
              ${grid ? html`<svg width="22" height="22" viewBox="0 0 22 22" fill="none" stroke="#666" stroke-width="2"><rect x="1" y="1" width="20" height="20" rx="1" /><path d="M11 1V21M1 11H21" /></svg>` : ""}
              <span>${t}</span>
            </a>`)}
        </div>
        <div class="views">
          <button aria-label="缩略图"><svg width="22" height="22" viewBox="0 0 22 22" fill="#b4b4b4"><path d="M0 0H22V12H0zM0 15H6V21H0zM8 15H14V21H8zM16 15H22V21H16z" /></svg></button>
          <button aria-label="标签"><svg width="22" height="22" viewBox="0 0 22 22" fill="#666"><path d="M0 0H22V22H0z" /></svg></button>
          <button aria-label="上一个"><svg width="10" height="16" viewBox="0 0 10 16" fill="#555"><path d="M9 0V16L0 8z" /></svg></button>
          <button aria-label="下一个"><svg width="10" height="16" viewBox="0 0 10 16" fill="#bbb"><path d="M1 0V16L10 8z" /></svg></button>
          <button aria-label="演示"><svg width="26" height="24" viewBox="0 0 26 24" fill="none" stroke="#555" stroke-width="2"><path d="M0 2H26M3 2V16H23V2M13 16V21M7 22H19" /></svg></button>
        </div>
      </nav>
    `;
  }
}
